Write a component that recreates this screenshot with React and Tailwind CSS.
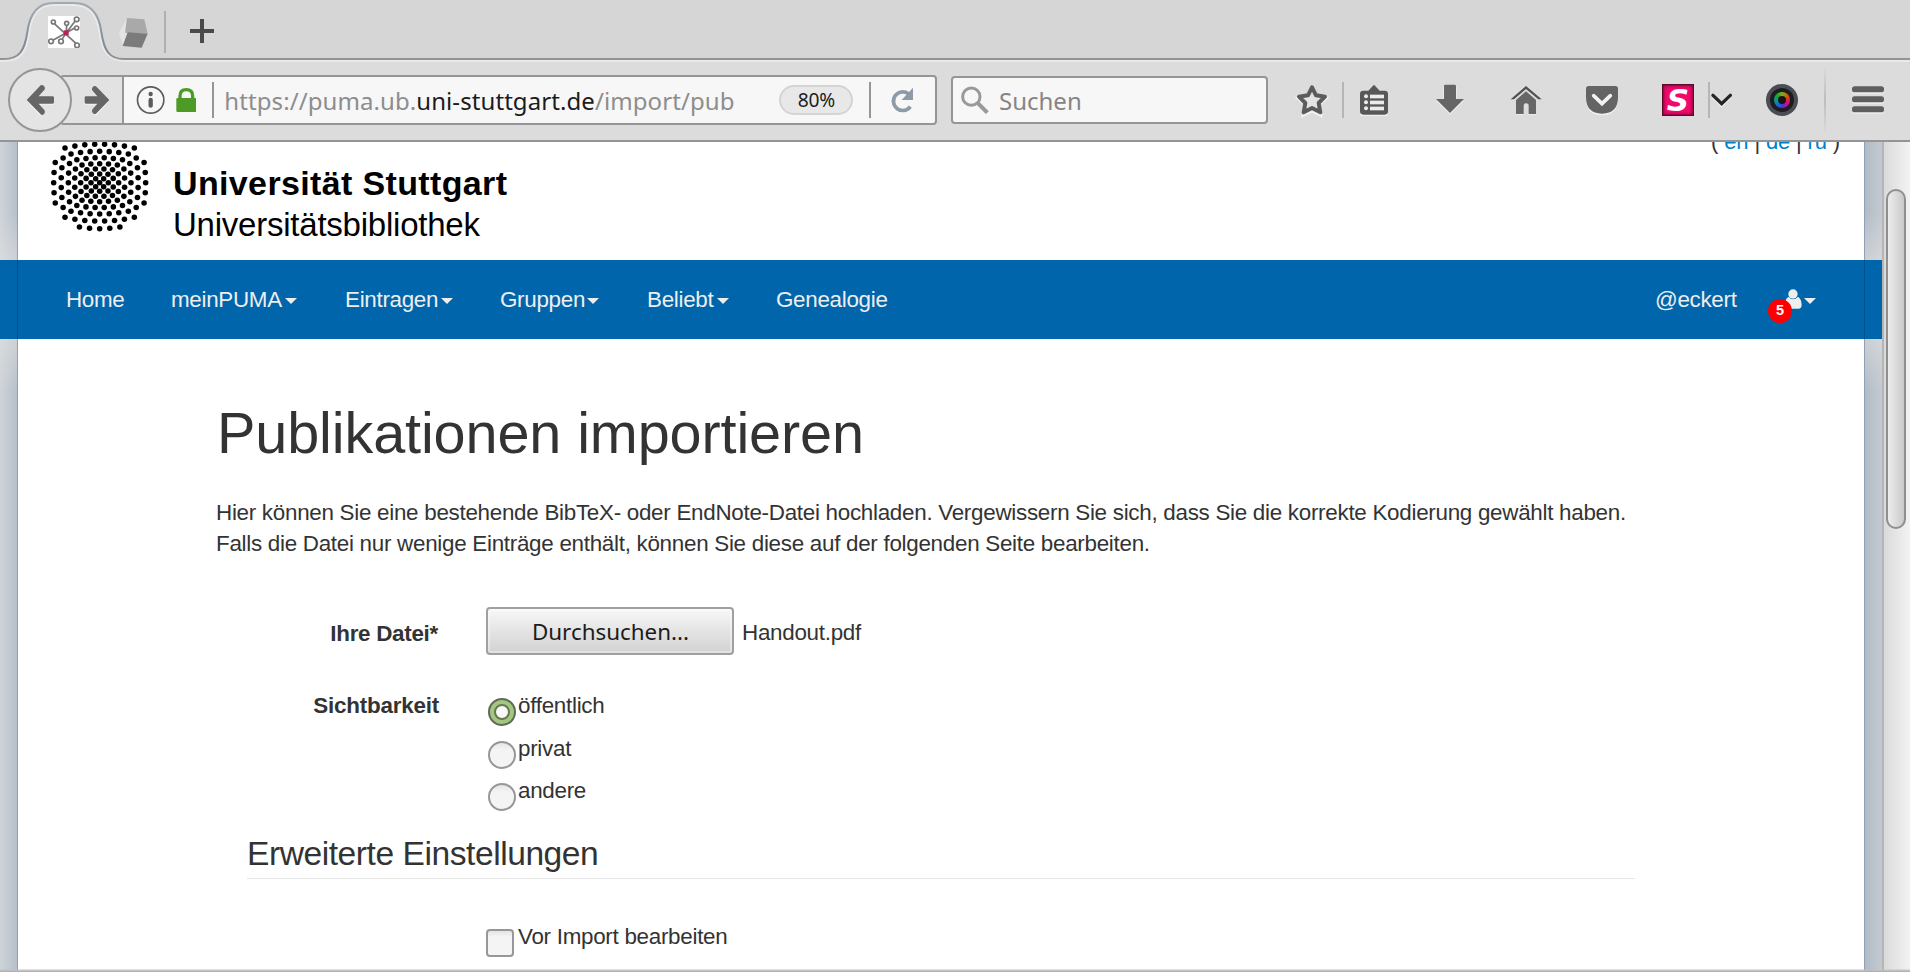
import React from "react";

// Draws a group in triple-resolution coordinates at its real size.
function Glyph({ box, className, children }) {
  const [x, y, w, h] = box;
  return (
    <svg viewBox={`${x} ${y} ${w} ${h}`} width={w / 3} height={h / 3} className={"shrink-0 " + (className || "")} fill="none">
      {children}
    </svg>
  );
}

const GREY = "#666666";

// [axis distance, diagonal distance] for every ring of the dot emblem
const RINGS = [[12.5, 12], [26, 25], [41, 38.5], [57, 53], [75, 68.5], [94, 86], [115.5, 104], [138, 119]];

function emblemDots() {
  const dots = [[0, 0]];
  RINGS.forEach(([axis, diag], i) => {
    const m = i + 1;
    for (let a = -m; a <= m; a += 2) {
      if (m === 8 && Math.abs(a) > 4) continue;
      const t = (diag / m) * a * (m === 8 ? 1.02 : 1);
      const r = axis + (diag - axis) * (a / m) * (a / m);
      dots.push([t, r]);
      if (m < 8) dots.push([t, -r]);
      if (Math.abs(a) !== m) dots.push([r, t], [-r, t]);
    }
  });
  return dots;
}

function Emblem() {
  return (
    <Glyph box={[54, 4, 312, 310]} className="ml-[30px]">
      {emblemDots().map(([x, y], i) => (
        <circle key={i} cx={209 + x} cy={159 + y} r="8.3" fill="#000" />
      ))}
    </Glyph>
  );
}

function TabStrip() {
  return (
    <div className="relative flex h-[62px] shrink-0 items-start bg-[#d6d6d6]">
      <svg className="absolute left-0 top-0" width="1910" height="62" viewBox="0 0 5730 186" fill="none">
        <path d="M0 180 C 60 180 74 150 82 96 C 90 35 118 9 160 9 H 222 C 266 9 296 35 304 96 C 312 150 326 180 380 180 H5730 V186 H0 Z" fill="#dcdcdc" />
        <path d="M0 183 H20 C 66 180 80 150 88 96 C 95 40 122 15 160 15 H 222 C 262 15 290 40 298 96 C 306 150 322 183 380 183 H5730" stroke="#e9e9e9" strokeWidth="6" />
        <defs>
          <linearGradient id="edge" gradientUnits="userSpaceOnUse" x1="0" y1="0" x2="0" y2="180">
            <stop offset="0" stopColor="#a4abb2" />
            <stop offset=".85" stopColor="#7d8894" />
            <stop offset="1" stopColor="#959595" />
          </linearGradient>
        </defs>
        <path d="M0 177 H10 C 60 177 74 150 82 96 C 90 35 118 9 160 9 H 222 C 266 9 296 35 304 96 C 312 150 326 177 372 177 H5730" stroke="url(#edge)" strokeWidth="6" />
      </svg>
      <Glyph box={[144, 48, 96, 96]} className="relative ml-12 mt-4">
        <rect x="144" y="48" width="96" height="96" fill="#fff" />
        <g stroke="#777" strokeWidth="5">
          <path d="M162 70 L232 134 M199 98 L226 62 M199 98 L186 118 M199 98 L156 122 M199 98 L224 84 M199 98 L200 76" />
          <g fill="#fff">
            <circle cx="160" cy="66" r="6" />
            <circle cx="200" cy="70" r="6" />
            <circle cx="230" cy="58" r="7" />
            <circle cx="230" cy="84" r="6" />
            <circle cx="153" cy="124" r="7" />
            <circle cx="183" cy="124" r="7" />
            <circle cx="231" cy="136" r="7" />
          </g>
        </g>
        <rect x="191" y="91" width="15" height="15" fill="#b5235a" />
      </Glyph>
      <Glyph box={[350, 48, 96, 96]} className="relative ml-[37px] mt-4">
        <path d="M380 54 L356 98 L368 138 L386 96 Z" fill="#e3e3e3" />
        <path d="M380 54 L432 58 L442 102 L374 98 Z" fill="#a9a9a9" />
        <path d="M382 97 L442 101 L424 143 L367 138 Z" fill="#7b7b7b" />
      </Glyph>
      <div className="relative ml-[15px] mt-[11px] h-[42px] w-[2px] bg-[#b0b0b0]" />
      <Glyph box={[570, 57, 72, 72]} className="relative ml-6 mt-[19px]">
        <path d="M606 57 V129 M570 93 H642" stroke="#4a4a4a" strokeWidth="12" />
      </Glyph>
    </div>
  );
}

function Toolbar() {
  return (
    <div className="flex h-[80px] shrink-0 items-center border-b-2 border-[#959595] bg-[#dcdcdc] pb-[2px] font-['Noto_Sans',sans-serif] text-[24px]">
      <div className="relative z-10 ml-2 flex size-16 shrink-0 items-center justify-center rounded-full border-2 border-[#959595] bg-[#e4e4e4]">
        <Glyph box={[78, 252, 86, 98]}>
          <path d="M80 303 L121 262 L133 274 L116 292 H162 V314 H116 L133 334 L121 348 Z" fill="#f2f2f2" />
          <path d="M80 300 L122 256 Q127 253 132 258 Q138 264 133 270 L116 289 H158 Q162 289 162 293 V307 Q162 311 158 311 H116 L133 330 Q138 336 132 342 Q127 347 122 343 Z" fill={GREY} />
        </Glyph>
      </div>
      <div className="-ml-3 flex h-[50px] w-[877px] shrink-0 items-center overflow-hidden rounded-[4px] border-2 border-[#959595] bg-[#f7f7f7]">
        <div className="flex h-full w-[62px] shrink-0 items-center border-r-2 border-[#959595] bg-[#e2e2e2] pl-[22px]">
          <Glyph box={[252, 252, 78, 98]}>
            <path d="M328 303 L288 262 L276 274 L292 292 H254 V314 H292 L276 334 L288 348 Z" fill="#f2f2f2" />
            <path d="M328 300 L288 259 Q283 256 278 261 Q273 267 278 273 L292 289 H258 Q254 289 254 293 V307 Q254 311 258 311 H292 L278 327 Q273 333 278 339 Q283 344 288 341 Z" fill={GREY} />
          </Glyph>
        </div>
        <Glyph box={[406, 258, 86, 84]} className="ml-[12px]">
          <circle cx="450" cy="300" r="39.5" stroke="#5c5c5c" strokeWidth="5" />
          <circle cx="450" cy="282" r="6.5" fill="#5c5c5c" />
          <path d="M450 300 V317" stroke="#5c5c5c" strokeWidth="13" strokeLinecap="round" />
        </Glyph>
        <Glyph box={[527, 264, 62, 72]} className="ml-[11px]">
          <path d="M539 300 V288 Q539 269 558 269 Q577 269 577 288 V300" stroke="#4e9a27" strokeWidth="10" />
          <rect x="528" y="294" width="60" height="42" rx="4" fill="#4e9a27" />
        </Glyph>
        <div className="ml-[16px] h-9 w-[2px] shrink-0 bg-[#959595]" />
        <div className="ml-[10px] w-[555px] shrink-0 whitespace-pre pt-[2px] tracking-[0.08px] text-[#8d8d8d]">
          https://puma.ub.<span className="text-[#1c1c1c]">uni-stuttgart.de</span>/import/pub
        </div>
        <div className="flex h-[30px] w-[74px] shrink-0 items-center justify-center rounded-full border-2 border-[#d4d4d4] bg-[#e8e8e8] text-[19.2px] tracking-[-0.2px] text-[#1c1c1c]">80%</div>
        <div className="ml-4 h-9 w-[2px] shrink-0 bg-[#959595]" />
        <Glyph box={[1290, 82, 72, 78]} className="ml-[19px]">
          <path d="M1351 141 A28 28 0 1 1 1345 102" stroke="#8d9aa8" strokeWidth="11" />
          <path d="M1359 84 V121 H1325 Z" fill="#8d9aa8" />
        </Glyph>
      </div>
      <div className="ml-[14px] flex h-12 w-[317px] shrink-0 items-center rounded-[4px] border-2 border-[#959595] bg-[#f7f7f7] pl-[8px] text-[#858585]">
        <Glyph box={[62, 76, 84, 84]}>
          <circle cx="93" cy="108" r="26" stroke="#999" strokeWidth="9" />
          <path d="M111 126 L141 156" stroke="#999" strokeWidth="12" />
        </Glyph>
        <span className="ml-[10px] pt-[2px]">Suchen</span>
      </div>
      <Glyph box={[1065, 68, 102, 106]} className="ml-[27px]">
        <path d="M1116 84 L1129 109 L1157 113 L1137 132 L1142 163 L1116 150 L1090 163 L1095 132 L1075 113 L1103 109 Z" stroke="#f2f2f2" strokeWidth="10" transform="translate(0 4)" />
        <path d="M1116 84 L1128 108 L1155 112 L1136 131 L1141 159 L1116 146 L1091 159 L1096 131 L1077 112 L1104 108 Z" stroke="#5c5c5c" strokeWidth="12" strokeLinejoin="round" fill="#e4e4e4" />
      </Glyph>
      <div className="ml-[13px] h-9 w-[2px] shrink-0 bg-[#b5b5b5]" />
      <Glyph box={[1260, 70, 84, 98]} className="ml-4">
        <rect x="1260" y="94" width="84" height="74" rx="10" fill="#f0f0f0" />
        <path d="M1270 90 H1285 L1302 72 L1319 90 H1334 Q1344 90 1344 100 V152 Q1344 162 1334 162 H1270 Q1260 162 1260 152 V100 Q1260 90 1270 90 Z" fill="#585858" />
        <g fill="#ececec">
          <rect x="1290" y="102" width="42" height="11" />
          <rect x="1290" y="120" width="42" height="11" />
          <rect x="1290" y="138" width="42" height="11" />
          <circle cx="1278" cy="107" r="6" />
          <circle cx="1278" cy="125" r="6" />
          <circle cx="1278" cy="143" r="6" />
        </g>
      </Glyph>
      <Glyph box={[18, 76, 84, 94]} className="ml-12">
        <path d="M18 126 H40 V84 H80 V126 H102 L60 167 Z" fill="#f0f0f0" />
        <path d="M42 82 Q42 78 46 78 H74 Q78 78 78 82 V121 H102 L60 163 L18 121 H42 Z" fill={GREY} />
      </Glyph>
      <Glyph box={[240, 76, 96, 92]} className="ml-[46px]">
        <path d="M258 166 H280 M296 166 H318" stroke="#f2f2f2" strokeWidth="5" />
        <path d="M242 119 L288 79 L335 119 H325 L288 88 L252 119 Z" fill="#505050" />
        <path d="M288 95 L318 121 V163 H296 V138 Q296 131 288 131 Q281 131 281 138 V163 H258 V121 Z" fill={GREY} />
      </Glyph>
      <Glyph box={[468, 76, 96, 92]} className="ml-[44px]">
        <path d="M468 115 Q468 167 516 167 Q564 167 564 115 Z" fill="#f0f0f0" />
        <path d="M476 79 H556 Q564 79 564 87 V113 Q564 162 516 162 Q468 162 468 113 V87 Q468 79 476 79 Z" fill="#646464" />
        <path d="M491 108 L516 132 L541 108" stroke="#f2f2f2" strokeWidth="11" strokeLinecap="round" />
      </Glyph>
      <div className="ml-11 flex size-8 shrink-0 items-center justify-center border border-[#5a0828] bg-[#f2086c] font-['DejaVu_Sans',sans-serif] text-[31px] font-bold italic leading-[28px] text-white shadow-[inset_0_0_3px_1px_#7a0a38]">
        S
      </div>
      <div className="ml-[14px] h-9 w-[2px] shrink-0 bg-[#b5b5b5]" />
      <Glyph box={[844, 96, 64, 48]} className="ml-[1px]">
        <path d="M850 110 L876 136 L902 110" stroke="#f2f2f2" strokeWidth="9" />
        <path d="M850 106 L876 131 L902 106" stroke="#262626" strokeWidth="10" strokeLinecap="round" />
      </Glyph>
      <Lens />
      <div className="ml-[26px] h-[70px] w-[2px] shrink-0 bg-[linear-gradient(to_bottom,transparent,#bdbdbd,transparent)]" />
      <Glyph box={[1266, 74, 96, 92]} className="ml-[26px]">
        {[78, 108, 138].map((y) => (
          <g key={y}>
            <rect x="1266" y={y + 5} width="96" height="17" rx="8" fill="#efefef" />
            <rect x="1266" y={y} width="96" height="18" rx="8" fill="#5e5e5e" />
          </g>
        ))}
      </Glyph>
    </div>
  );
}

function Lens() {
  return (
    <div className="ml-[34px] flex size-8 shrink-0 items-center justify-center rounded-full bg-[#4a4d54]">
      <div className="flex size-6 items-center justify-center rounded-full bg-[#1d1d21]">
        <div className="flex size-4 items-center justify-center rounded-full bg-[conic-gradient(#7fb01a,#c06a10,#e02040,#c010a0,#4a30e0,#1070d0,#00a080,#20a030,#7fb01a)]">
          <div className="size-2 rounded-full bg-[#151515]" />
        </div>
      </div>
    </div>
  );
}

function Caret({ className }) {
  return <span className={"border-x-[6px] border-t-[6px] border-x-transparent border-t-[#eee] " + className} />;
}

function NavBar() {
  return (
    <nav className="relative z-10 -mx-[18px] flex h-[79px] w-[1882px] shrink-0 items-center bg-[#0065aa] text-[22.4px] tracking-[-0.3px] text-[#eee]">
      <div className="h-full w-[17px] shrink-0 border-r border-[#004f8e] box-content" />
      <span className="ml-12 w-[105px]">Home</span>
      <span className="w-[114px]">meinPUMA</span>
      <Caret className="mt-[3px] mr-[48px]" />
      <span className="w-[96px]">Eintragen</span>
      <Caret className="mt-[3px] mr-[47px]" />
      <span className="w-[87px]">Gruppen</span>
      <Caret className="mt-[3px] mr-[48px]" />
      <span className="w-[70px]">Beliebt</span>
      <Caret className="mt-[3px] mr-[47px]" />
      <span className="w-[879px]">Genealogie</span>
      <span className="w-[113px]">@eckert</span>
      <span className="relative flex h-12 w-[34px] items-center">
        <Glyph box={[554, 478, 50, 60]} className="ml-[17px] -mt-[1px]">
          <path d="M565 501 Q554 508 554 524 Q554 537 565 537 H594 Q604 537 604 526 Q604 508 593 501 Q586 509 578 509 Q571 509 565 501 Z" fill="#eee" />
          <circle cx="578" cy="493" r="14" fill="#eee" />
        </Glyph>
        <span className="absolute left-0 top-[23px] flex size-6 items-center justify-center rounded-full bg-[#ff0000] text-[14.5px] font-bold text-white">5</span>
      </span>
      <Caret className="ml-[2px] mt-[3px]" />
      <div className="ml-auto h-full w-[17px] shrink-0 border-l border-[#004f8e] box-content" />
    </nav>
  );
}

function Radio({ label, checked }) {
  return (
    <label className="flex h-[42.5px] items-start">
      {checked ? (
        <span className="mt-[8px] flex size-7 items-center justify-center rounded-full border-2 border-[#5f6b56] bg-[#a3c77f]">
          <span className="size-4 rounded-full border-2 border-[#66784f] bg-[#f8f8f8]" />
        </span>
      ) : (
        <span className="mt-[8px] size-7 rounded-full border-2 border-[#979797] bg-[linear-gradient(to_bottom,#e6e6e6,#f4f4f4_30%)]" />
      )}
      <span className="ml-[2px] leading-8">{label}</span>
    </label>
  );
}

function ImportPage() {
  return (
    <main className="flex flex-col pl-[198px] text-[22.4px] tracking-[-0.28px] text-[#333]">
      <h1 className="ml-[1px] mt-[61px] h-[66px] text-[57.6px] leading-[66px] tracking-[-0.12px] whitespace-nowrap">Publikationen importieren</h1>
      <p className="mt-[31px] whitespace-nowrap leading-[31px]">
        Hier können Sie eine bestehende BibTeX- oder EndNote-Datei hochladen. Vergewissern Sie sich, dass Sie die korrekte Kodierung gewählt haben.
        <br />
        Falls die Datei nur wenige Einträge enthält, können Sie diese auf der folgenden Seite bearbeiten.
      </p>
      <div className="mt-[48px] flex h-[48px] items-center">
        <span className="w-[222px] pt-[5px] text-right font-bold">Ihre Datei*</span>
        <button className="ml-[48px] h-12 w-[248px] rounded-[4px] border-2 border-[#a0a0a0] bg-[linear-gradient(to_bottom,#f8f8f8,#e4e4e4_50%,#d2d2d2)] pl-[1px] pt-[2px] font-['Noto_Sans',sans-serif] text-[22.4px] tracking-normal text-[#1c1c1c] shadow-[inset_0_0_0_2px_rgba(255,255,255,0.35)]">
          Durchsuchen...
        </button>
        <span className="ml-[8px] pt-[3px]">Handout.pdf</span>
      </div>
      <div className="mt-[35px] flex h-[128px] items-start">
        <span className="w-[223px] text-right font-bold leading-8 tracking-[-0.2px]">Sichtbarkeit</span>
        <div className="ml-[49px] flex flex-col">
          <Radio label="öffentlich" checked />
          <Radio label="privat" />
          <Radio label="andere" />
        </div>
      </div>
      <h2 className="ml-[31px] mt-[11px] h-[50px] w-[1388px] border-b border-[#e5e5e5] text-[33.6px] leading-[50px] tracking-[-0.45px]">
        Erweiterte Einstellungen
      </h2>
      <label className="ml-[270px] mt-[42px] flex items-start">
        <span className="mt-[8px] size-7 rounded-[4px] border-2 border-[#979797] bg-[linear-gradient(to_bottom,#e4e4e4,#f4f4f4_25%)]" />
        <span className="ml-[4px] leading-8">Vor Import bearbeiten</span>
      </label>
    </main>
  );
}

export default function App() {
  return (
    <div className="flex h-[972px] w-[1910px] flex-col overflow-hidden font-['Liberation_Sans',Arial,sans-serif]">
      <TabStrip />
      <Toolbar />
      <div className="relative flex h-[830px] shrink-0">
        <div className="relative w-[1882px] shrink-0 bg-[linear-gradient(to_bottom,transparent_70px,rgba(225,225,225,0.55)_118px,rgba(225,225,225,0.55)_197px,transparent_250px),linear-gradient(to_right,#cfd4d9,#b4bec9_18px,#b0bac5_1864px,#c3c9d1)] px-[17px]">
          <div className="h-[830px] border-x border-[#8fa1b3] bg-white">
            <header className="relative flex h-[118px] overflow-hidden">
              <div className="-mt-[10.7px]">
                <Emblem />
              </div>
              <div className="ml-[21px] flex flex-col whitespace-nowrap text-black">
                <span className="mt-[21px] h-[42px] text-[34px] font-bold leading-[40px] tracking-[0.36px]">Universität Stuttgart</span>
                <span className="h-[40px] text-[33px] leading-[40px] tracking-[-0.23px]">Universitätsbibliothek</span>
              </div>
              <div className="-mt-[13px] ml-auto mr-[24px] text-[22px] leading-[26px] tracking-[-0.15px] text-[#333]">
                ( <a className="text-[#0081cc]">en</a> | <a className="text-[#0081cc]">de</a> | <a className="text-[#0081cc]">ru</a> )
              </div>
            </header>
            <NavBar />
            <ImportPage />
          </div>
        </div>
        <div className="flex w-7 shrink-0 justify-center border-l-2 border-[#b5b5b5] bg-[linear-gradient(to_right,#dadada,#f3f3f3)] pr-[2px]">
          <div className="mt-[47px] h-[340px] w-5 rounded-full border-2 border-[#8f8f8f] bg-[linear-gradient(to_right,#ededed,#c9c9c9)]" />
        </div>
        <div className="absolute bottom-0 left-0 z-20 h-[3px] w-full bg-[linear-gradient(to_bottom,rgba(200,200,200,0.3),#bdbdbd_60%,#a8a8a8)]" />
      </div>
    </div>
  );
}
